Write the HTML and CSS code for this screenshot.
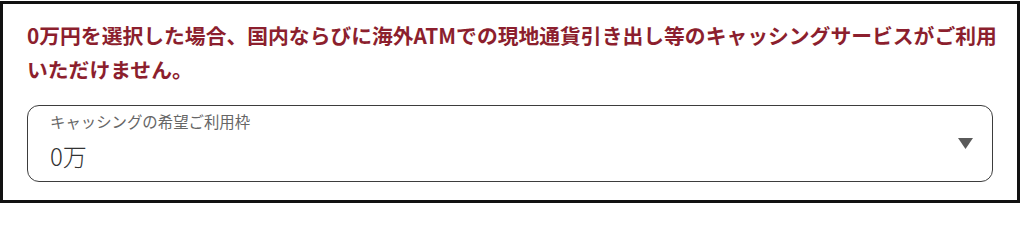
FILE: index.html
```html
<!DOCTYPE html>
<html lang="ja">
<head>
<meta charset="utf-8">
<link rel="stylesheet" href="styles.css">
</head>
<body>
<div class="frame">
  <p class="notice">0万円を選択した場合、国内ならびに海外ATMでの現地通貨引き出し等のキャッシングサービスがご利用<br>いただけません。</p>
  <div class="select">
    <div class="select-body">
      <div class="select-label">キャッシングの希望ご利用枠</div>
      <div class="select-value">0万</div>
    </div>
    <svg class="select-arrow" width="15" height="11" viewBox="0 0 15 11" aria-hidden="true">
      <polygon points="0,0 15,0 7.5,11" fill="#5a5a5a"/>
    </svg>
  </div>
</div>
</body>
</html>
```

FILE: styles.css
```css
html, body {
  margin: 0;
  padding: 0;
  background: #ffffff;
}
body {
  font-family: "Noto Sans CJK JP", "Noto Sans", sans-serif;
}
.frame {
  box-sizing: border-box;
  width: 1020px;
  height: 202px;
  margin-top: 1px;
  border: 3px solid #111111;
  padding: 14px 24px 0 24px;
  background: #ffffff;
}
.notice {
  margin: 0;
  font-size: 20.8px;
  line-height: 34px;
  font-weight: 700;
  color: #8c1f2e;
  white-space: nowrap;
}
.select {
  box-sizing: border-box;
  margin-top: 19px;
  height: 77px;
  border: 1.5px solid #3d3d3d;
  border-radius: 12px;
  display: flex;
  align-items: center;
  padding: 0 19px 0 22px;
}
.select-body {
  flex: 1;
  display: flex;
  flex-direction: column;
  gap: 13px;
  padding-bottom: 4px;
}
.select-label {
  font-size: 15.4px;
  line-height: 16px;
  color: #666666;
}
.select-value {
  font-size: 24px;
  line-height: 28px;
  font-weight: 300;
  color: #333333;
}
.select-arrow {
  display: block;
  flex: none;
}
```
